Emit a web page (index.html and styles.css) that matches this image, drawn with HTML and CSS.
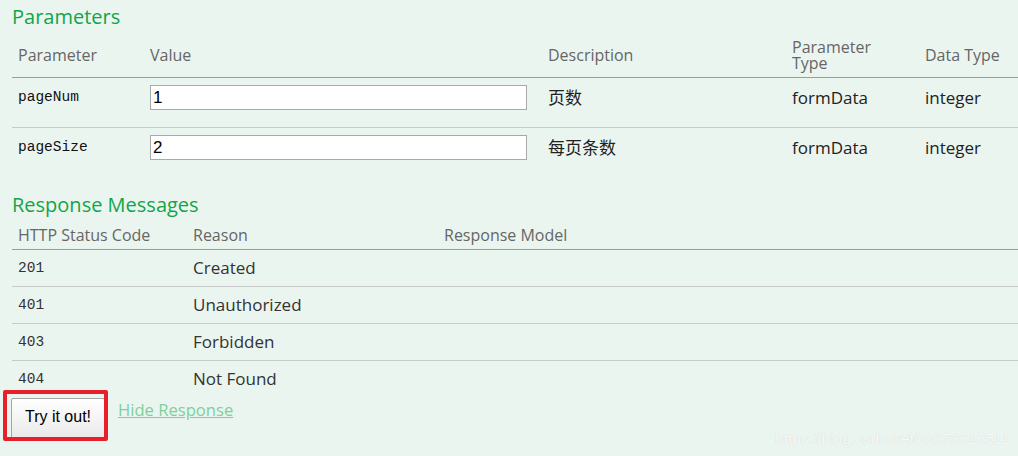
FILE: index.html
```html
<!DOCTYPE html>
<html lang="en">
<head>
    <meta charset="UTF-8">
    <meta name="viewport" content="width=device-width, initial-scale=1.0">
    <title>Operation - Parameters</title>
    <link rel="stylesheet" href="styles.css">
</head>
<body>
    <div class="operation">
        <!-- Parameters -->
        <h4 class="section-title">Parameters</h4>
        <table class="params">
            <colgroup>
                <col class="c-name">
                <col class="c-value">
                <col class="c-desc">
                <col class="c-type">
                <col class="c-data">
            </colgroup>
            <thead>
                <tr>
                    <th>Parameter</th>
                    <th>Value</th>
                    <th>Description</th>
                    <th class="two-line"><span>Parameter</span><span>Type</span></th>
                    <th>Data Type</th>
                </tr>
            </thead>
            <tbody>
                <tr>
                    <td class="code">pageNum</td>
                    <td><input type="text" class="param-input" value="1"></td>
                    <td>页数</td>
                    <td>formData</td>
                    <td>integer</td>
                </tr>
                <tr>
                    <td class="code">pageSize</td>
                    <td><input type="text" class="param-input" value="2"></td>
                    <td>每页条数</td>
                    <td>formData</td>
                    <td>integer</td>
                </tr>
            </tbody>
        </table>

        <!-- Response Messages -->
        <h4 class="section-title second">Response Messages</h4>
        <table class="responses">
            <colgroup>
                <col class="c-code">
                <col class="c-reason">
                <col class="c-model">
            </colgroup>
            <thead>
                <tr>
                    <th>HTTP Status Code</th>
                    <th>Reason</th>
                    <th>Response Model</th>
                </tr>
            </thead>
            <tbody>
                <tr><td class="code">201</td><td>Created</td><td></td></tr>
                <tr><td class="code">401</td><td>Unauthorized</td><td></td></tr>
                <tr><td class="code">403</td><td>Forbidden</td><td></td></tr>
                <tr><td class="code">404</td><td>Not Found</td><td></td></tr>
            </tbody>
        </table>

        <div class="actions">
            <span class="try-wrap"><button class="submit">Try it out!</button></span>
            <a href="#" class="hide-link">Hide Response</a>
        </div>
    </div>

    <div class="watermark">https://blog.csdn.net/cs373616511</div>
</body>
</html>
```

FILE: styles.css
```css
html, body {
    margin: 0;
    height: 100%;
}
body {
    background-color: #ebf5f0;
    font-family: 'Open Sans', 'Noto Sans CJK SC', sans-serif;
    color: #222;
    overflow: hidden;
    position: relative;
}
.operation {
    padding: 3px 0 0 12px;
}
.section-title {
    margin: 0;
    font-size: 20px;
    font-weight: normal;
    color: #10a54a;
    line-height: 27px;
}
.section-title.second {
    margin-top: 14px;
}
table {
    border-collapse: collapse;
    table-layout: fixed;
    width: 1006px;
}
th {
    font-weight: normal;
    font-size: 16px;
    color: #666;
    text-align: left;
    padding: 0 6px;
    border-bottom: 1px solid #9c9c9c;
    vertical-align: middle;
    line-height: 16px;
}
th.two-line span {
    display: block;
    height: 16px;
    line-height: 16px;
}
td {
    font-size: 17px;
    text-align: left;
    padding: 0 6px;
    border-bottom: 1px solid #c8cbc9;
}
tbody tr:last-child td {
    border-bottom: none;
}
.code {
    font-family: 'Liberation Mono', monospace;
    font-size: 14.5px;
    color: #111;
}

/* parameters table */
.c-name { width: 132px; }
.c-value { width: 398px; }
.c-desc { width: 244px; }
.c-type { width: 133px; }
.c-data { width: 99px; }
.params th {
    padding-top: 3px;
    height: 44px;
}
.params td {
    vertical-align: top;
    padding-top: 7px;
    padding-bottom: 17px;
    height: 25px;
    line-height: 25px;
}
.param-input {
    display: block;
    box-sizing: border-box;
    width: 377px;
    height: 25px;
    margin: 0;
    padding: 0 2px;
    border: 1px solid #a9a9a9;
    background: #fff;
    font-family: 'Liberation Sans', sans-serif;
    font-size: 17px;
    color: #000;
}

/* response messages table */
.c-code { width: 175px; }
.c-reason { width: 251px; }
.responses th {
    padding-top: 3px;
    height: 28px;
}
.responses td {
    height: 36px;
    vertical-align: middle;
    line-height: 20px;
    color: #333;
}

/* actions */
.actions {
    display: flex;
    align-items: flex-start;
    margin-left: -1px;
    margin-top: 1px;
}
.try-wrap {
    position: relative;
    display: inline-block;
}
.try-wrap::after {
    content: "";
    position: absolute;
    left: -8px;
    top: -8px;
    width: 105px;
    height: 51px;
    box-sizing: border-box;
    border: 4px solid #e61f2b;
    border-radius: 2px;
}
.submit {
    display: block;
    box-sizing: border-box;
    width: 94px;
    height: 41px;
    margin: 0;
    padding: 0 0 4px;
    font-family: 'Liberation Sans', sans-serif;
    font-size: 16px;
    color: #000;
    background: linear-gradient(#ffffff, #e9e9e9);
    border: 1px solid #a6a6a6;
    border-radius: 2px;
}
.hide-link {
    margin-left: 13px;
    font-size: 16.6px;
    line-height: 23px;
    color: #7fcf9c;
    text-decoration: underline;
}
.watermark {
    position: absolute;
    right: 8px;
    bottom: 8px;
    font-family: 'Liberation Sans', sans-serif;
    font-size: 15.5px;
    color: #f7faf8;
    text-shadow: 0 0 1px #c4cec9;
}
```
